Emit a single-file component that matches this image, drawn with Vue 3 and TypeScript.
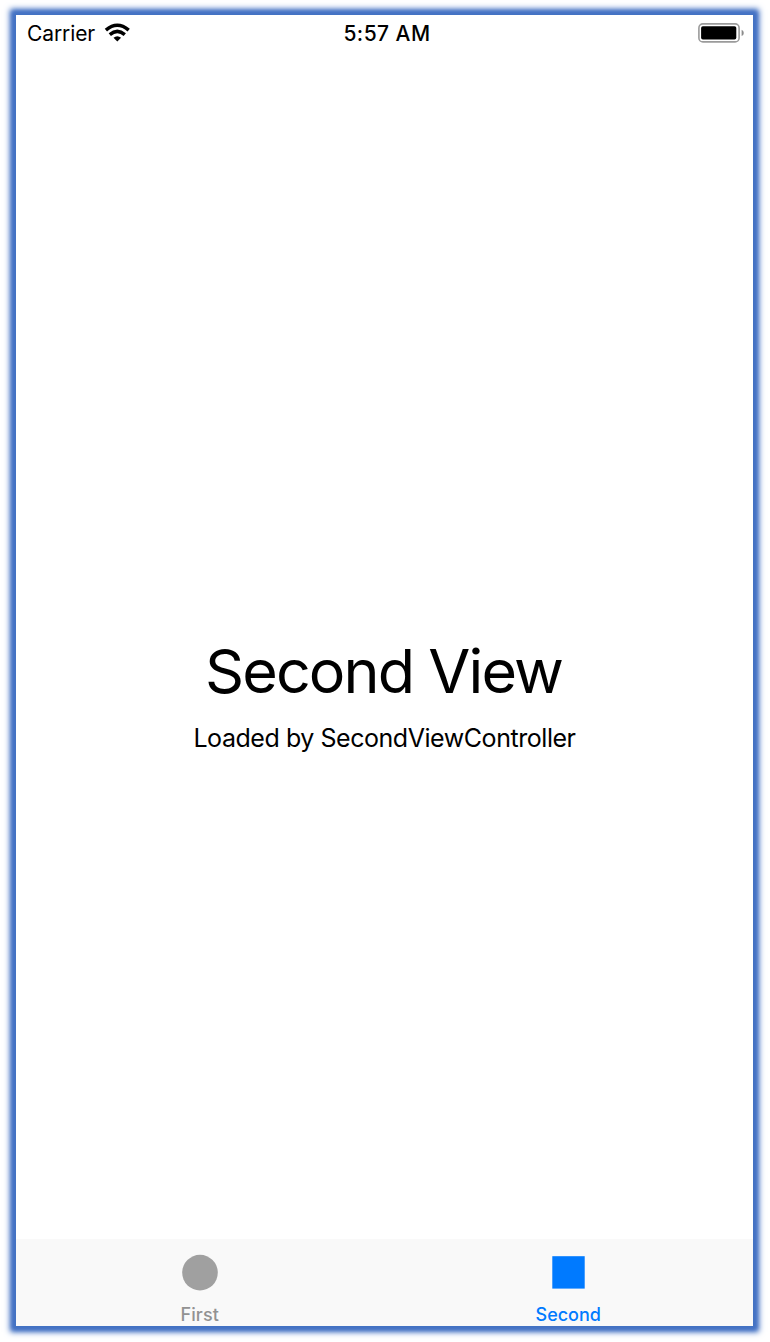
<script setup lang="ts">
import { ref } from 'vue'

interface Tab {
  id: string
  label: string
  shape: 'circle' | 'square'
}

const tabs: Tab[] = [
  { id: 'first', label: 'First', shape: 'circle' },
  { id: 'second', label: 'Second', shape: 'square' },
]

const activeTab = ref<string>('second')
</script>

<template>
  <div class="stage">
    <div class="screen">
      <header class="status">
        <div class="network">
          <span class="carrier">Carrier</span>
          <svg class="wifi" width="26" height="19" viewBox="0 0 26 19" aria-hidden="true">
            <g fill="none" stroke="#000" stroke-width="3.5">
              <path d="M1.9 7.1Q13.3 -2.6 24.7 7.1" />
              <path d="M5.8 11.6Q13.3 5.2 20.8 11.6" />
            </g>
            <path d="M9.5 14.8Q13.3 11.7 17.1 14.8L13.3 18.5Z" />
          </svg>
        </div>
        <time class="clock">5:57 AM</time>
        <div class="power">
          <svg width="47" height="20" viewBox="0 0 47 20" aria-hidden="true">
            <rect x="0.9" y="0.9" width="40.2" height="18" rx="4" fill="none" stroke="#9b9b9b" stroke-width="1.6" />
            <rect x="3.1" y="3.2" width="35.2" height="13.4" rx="1.8" />
            <path d="M43.6 6.8Q45.8 7.5 45.8 9.9Q45.8 12.3 43.6 13Z" fill="#8c8c8c" />
          </svg>
        </div>
      </header>

      <main class="content">
        <h1>Second View</h1>
        <p>Loaded by SecondViewController</p>
      </main>

      <nav class="tabs">
        <button
          v-for="tab in tabs"
          :key="tab.id"
          type="button"
          class="tab"
          :class="[tab.id, { active: tab.id === activeTab }]"
          @click="activeTab = tab.id"
        >
          <svg width="36" height="36" viewBox="0 0 36 36" fill="currentColor" aria-hidden="true">
            <circle v-if="tab.shape === 'circle'" cx="18" cy="17.6" r="17.8" />
            <rect v-else x="1.3" y="1.2" width="32.4" height="32.4" />
          </svg>
          <span>{{ tab.label }}</span>
        </button>
      </nav>
    </div>
  </div>
</template>

<style>
body {
  margin: 0;
  background: #fff;
}
</style>

<style scoped>
.stage {
  box-sizing: border-box;
  width: 770px;
  height: 1342px;
  padding: 15px 17px 16px 16px;
  overflow: hidden;
  font-family: Inter, "Liberation Sans", sans-serif;
  color: #000;
}

.screen {
  display: flex;
  flex-direction: column;
  width: 737px;
  height: 1311px;
  background: #fff;
  box-shadow: 0 0 6px 6px #4472c4, 0 0 4px 4px #4472c4;
}

.status {
  display: grid;
  grid-template-columns: 1fr auto 1fr;
  align-items: center;
  height: 37px;
  padding: 0 8px 0 11px;
  font-size: 21px;
  line-height: 37px;
}

.network {
  display: flex;
  align-items: center;
  gap: 9px;
}

.carrier {
  letter-spacing: -0.1px;
}

.wifi {
  margin-top: -2px;
}

.clock {
  padding-left: 2px;
  font-weight: 500;
  letter-spacing: 0.45px;
}

.power {
  display: flex;
  justify-content: flex-end;
  margin-top: -2px;
}

.content {
  flex: 1;
  padding-top: 579px;
  text-align: center;
}

h1 {
  margin: 0;
  padding-right: 2px;
  font-size: 61px;
  font-weight: 400;
  line-height: 80px;
  letter-spacing: -1.9px;
}

p {
  margin: 11px 0 0;
  font-size: 25px;
  line-height: 32px;
  letter-spacing: -0.45px;
}

.tabs {
  display: flex;
  height: 87px;
  background: #f9f9f9;
}

.tab {
  display: flex;
  flex: 1;
  flex-direction: column;
  align-items: center;
  gap: 13px;
  padding: 16px 0 0;
  border: 0;
  background: none;
  color: #a0a0a0;
  font: 500 18px/22px Inter, "Liberation Sans", sans-serif;
}

.tab svg {
  overflow: visible;
}

.tab span {
  padding-right: 1px;
  color: #929292;
}

.tab.first span {
  letter-spacing: 0.15px;
}

.tab.active,
.tab.active span {
  color: #007aff;
}
</style>
